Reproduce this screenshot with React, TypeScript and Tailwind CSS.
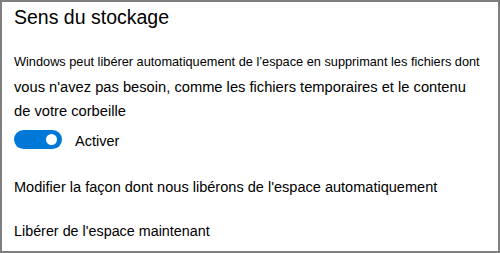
import React from 'react';

const font = { fontFamily: '"Liberation Sans", Arial, sans-serif' };

const Toggle: React.FC<{ on?: boolean }> = ({ on = true }) => (
  <div
    className={`flex h-[19px] w-[48px] shrink-0 items-center rounded-full ${
      on ? 'justify-end bg-[#0078d7] pr-[5px]' : 'justify-start border-2 border-black pl-[4px]'
    }`}
  >
    <div className={`h-[11px] w-[11px] rounded-full ${on ? 'bg-white' : 'bg-black'}`} />
  </div>
);

export default function App() {
  return (
    <div className="h-[253px] w-[500px] bg-white" style={font}>
      <div className="h-full w-full border-2 border-[#7f7f7f] px-[12px] text-black">
        {/* Title */}
        <h1 className="mt-[1px] h-[28px] text-[19.5px] leading-[28px]">Sens du stockage</h1>

        {/* Description */}
        <div className="mt-[18px]">
          <p className="h-[27px] whitespace-nowrap text-[12.75px] leading-[25px]">
            Windows peut libérer automatiquement de l’espace en supprimant les fichiers dont
          </p>
          <p className="h-[24px] whitespace-nowrap text-[14.7px] leading-[23px]">
            vous n'avez pas besoin, comme les fichiers temporaires et le contenu
          </p>
          <p className="h-[22px] whitespace-nowrap text-[14.7px] leading-[22px]">de votre corbeille</p>
        </div>

        {/* Toggle row */}
        <div className="mt-[7px] flex items-center gap-[13px]">
          <Toggle />
          <span className="mt-[5px] text-[14.5px] leading-[15px]">Activer</span>
        </div>

        {/* Links */}
        <p className="mt-[28px] whitespace-nowrap text-[14.55px] leading-[20px]">
          Modifier la façon dont nous libérons de l'espace automatiquement
        </p>
        <p className="mt-[24px] whitespace-nowrap text-[14.35px] leading-[20px]">
          Libérer de l'espace maintenant
        </p>
      </div>
    </div>
  );
}
